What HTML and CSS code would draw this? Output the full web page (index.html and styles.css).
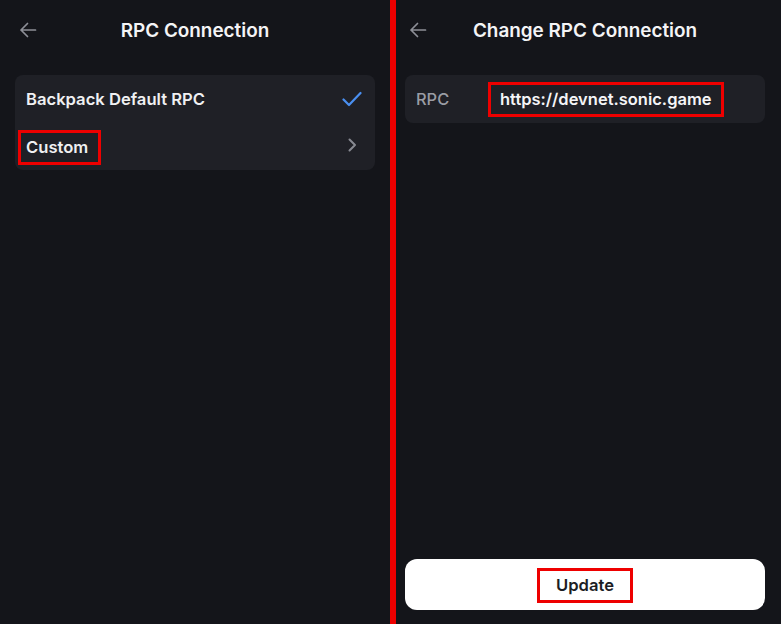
FILE: index.html
```html
<!DOCTYPE html>
<html>
<head>
<meta charset="utf-8">
<link rel="stylesheet" href="styles.css">
</head>
<body>
<div class="screens">
  <section class="panel">
    <header class="bar">
      <span class="back">
        <svg width="18" height="16" viewBox="0 0 18 16"><path d="M16.5 8H2M8.5 1.5L2 8l6.5 6.5" fill="none" stroke="currentColor" stroke-width="1.7" stroke-linecap="round" stroke-linejoin="round"/></svg>
      </span>
      <h1 class="title">RPC Connection</h1>
      <span></span>
    </header>
    <div class="card list">
      <div class="row">
        <span class="label">Backpack Default RPC</span>
        <svg class="check" width="20" height="16" viewBox="0 0 20 16"><path d="M1.5 8.5l5.5 5.5L18.5 2" fill="none" stroke="currentColor" stroke-width="2.2" stroke-linecap="round" stroke-linejoin="round"/></svg>
      </div>
      <div class="row">
        <span class="label mark mark-custom">Custom</span>
        <svg class="chev" width="10" height="14" viewBox="0 0 10 14"><path d="M2.5 1.5L8 7l-5.5 5.5" fill="none" stroke="currentColor" stroke-width="2" stroke-linecap="round" stroke-linejoin="round"/></svg>
      </div>
    </div>
  </section>
  <section class="panel panel-right">
    <header class="bar">
      <span class="back">
        <svg width="18" height="16" viewBox="0 0 18 16"><path d="M16.5 8H2M8.5 1.5L2 8l6.5 6.5" fill="none" stroke="currentColor" stroke-width="1.7" stroke-linecap="round" stroke-linejoin="round"/></svg>
      </span>
      <h1 class="title">Change RPC Connection</h1>
      <span></span>
    </header>
    <div class="card field">
      <span class="field-label">RPC</span>
      <span class="field-value mark">https://devnet.sonic.game</span>
    </div>
    <button class="update"><span class="mark mark-btn">Update</span></button>
  </section>
</div>
</body>
</html>
```
FILE: styles.css
```css
* { box-sizing: border-box; }
html, body {
  margin: 0;
  padding: 0;
  background: #14151a;
  font-family: Inter, "Noto Sans", sans-serif;
  color: #f2f2f4;
}
.screens {
  display: grid;
  grid-template-columns: 390px 391px;
  height: 624px;
}
.panel {
  display: flex;
  flex-direction: column;
  padding: 0 15px;
  height: 624px;
  background: #14151a;
}
.panel-right {
  border-left: 6px solid #ee0000;
  padding-left: 9px;
  padding-right: 16px;
}
.bar {
  height: 60px;
  display: grid;
  grid-template-columns: 1fr auto 1fr;
  align-items: center;
  margin-bottom: 15px;
}
.back {
  color: #8d8f97;
  display: flex;
  align-items: center;
  padding-left: 4px;
}
.title {
  margin: 0;
  font-size: 18.9px;
  font-weight: 600;
  color: #f4f4f6;
  white-space: nowrap;
}
.card {
  background: #1f2026;
  border-radius: 8px;
}
.list {
  display: flex;
  flex-direction: column;
  padding: 1px 0 2px;
}
.row {
  height: 46px;
  display: flex;
  align-items: center;
  justify-content: space-between;
  padding: 0 13px 0 11px;
}
.label {
  font-size: 16.6px;
  font-weight: 600;
  color: #f0f0f2;
}
.check { color: #4a8ff0; }
.chev { color: #888a92; margin-right: 5px; }
.mark {
  border: 3px solid #ee0000;
}
.mark-custom {
  margin-left: -8px;
  padding: 4px 10px 5px 5px;
  margin-top: 5px;
}
.field {
  height: 48px;
  display: flex;
  align-items: center;
  padding-left: 11px;
}
.field-label {
  width: 72px;
  font-size: 16.4px;
  font-weight: 500;
  color: #9a9ca4;
}
.field-value {
  font-size: 16.5px;
  font-weight: 600;
  color: #f5f5f7;
  padding: 4px 9px 5px 9px;
}
.update {
  margin-top: auto;
  margin-bottom: 14px;
  height: 51px;
  width: 100%;
  border: none;
  border-radius: 12px;
  background: #ffffff;
  display: flex;
  align-items: center;
  justify-content: center;
  font-family: inherit;
  font-size: 16.6px;
  font-weight: 600;
  color: #1c1d24;
  padding: 0;
}
.mark-btn {
  padding: 4px 16px 5px;
  margin-top: 1px;
}
```
